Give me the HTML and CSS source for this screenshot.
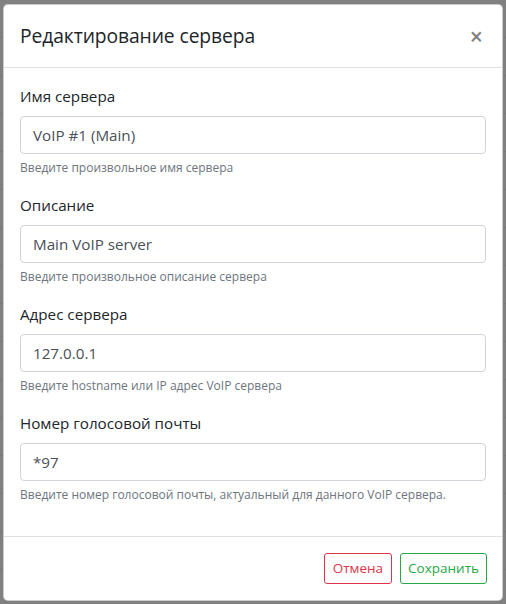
FILE: index.html
```html
<!DOCTYPE html>
<html lang="ru">
<head>
<meta charset="utf-8">
<title>Редактирование сервера</title>
<link rel="stylesheet" href="styles.css">
</head>
<body>
<div class="backdrop">
  <div class="modal">
    <div class="modal-header">
      <h5 class="modal-title">Редактирование сервера</h5>
      <button class="close" type="button" aria-label="Close">×</button>
    </div>
    <div class="modal-body">
      <div class="form-group">
        <label class="label">Имя сервера</label>
        <div class="input">VoIP #1 (Main)</div>
        <small class="help">Введите произвольное имя сервера</small>
      </div>
      <div class="form-group">
        <label class="label">Описание</label>
        <div class="input">Main VoIP server</div>
        <small class="help">Введите произвольное описание сервера</small>
      </div>
      <div class="form-group">
        <label class="label">Адрес сервера</label>
        <div class="input">127.0.0.1</div>
        <small class="help">Введите hostname или IP адрес VoIP сервера</small>
      </div>
      <div class="form-group">
        <label class="label">Номер голосовой почты</label>
        <div class="input">*97</div>
        <small class="help">Введите номер голосовой почты, актуальный для данного VoIP сервера.</small>
      </div>
    </div>
    <div class="modal-footer">
      <button class="btn btn-danger" type="button">Отмена</button>
      <button class="btn btn-success" type="button">Сохранить</button>
    </div>
  </div>
</div>
</body>
</html>
```

FILE: styles.css
```css
* { box-sizing: border-box; }
html, body { margin: 0; padding: 0; }
body {
  width: 506px;
  height: 604px;
  overflow: hidden;
  font-family: "Open Sans", "Noto Sans", sans-serif;
  color: #212529;
  background-color: #808080;
  background-image: repeating-linear-gradient(to bottom, transparent 0, transparent 37px, #787878 37px, #787878 38px);
}
.backdrop {
  padding: 4px 3px 0 3px;
}
.modal {
  width: 500px;
  background: #fff;
  border: 1px solid rgba(0,0,0,0.2);
  border-radius: 5px;
}
.modal-header {
  display: flex;
  align-items: flex-start;
  justify-content: space-between;
  padding: 16px 16px;
  border-bottom: 1px solid #dee2e6;
}
.modal-title {
  margin: 0;
  font-size: 19.3px;
  font-weight: 500;
  line-height: 30px;
  letter-spacing: -0.1px;
}
.close {
  border: 0;
  background: none;
  padding: 0 3px 0 0;
  margin: 0;
  font-family: "Open Sans", sans-serif;
  font-size: 23px;
  font-weight: 600;
  line-height: 30px;
  color: #000;
  opacity: 0.5;
}
.modal-body {
  padding: 16px;
}
.form-group {
  display: flex;
  flex-direction: column;
  margin-bottom: 16px;
}
.label {
  font-size: 15.2px;
  line-height: 24px;
  margin-bottom: 8px;
}
.input {
  height: 38px;
  padding: 6px 12px;
  font-size: 15.2px;
  line-height: 24px;
  color: #495057;
  border: 1px solid #ced4da;
  border-radius: 4px;
  background: #fff;
}
.help {
  margin-top: 4px;
  font-size: 12px;
  line-height: 19px;
  color: #6c757d;
}
.modal-footer {
  display: flex;
  justify-content: flex-end;
  align-items: center;
  padding: 12px 11px 12px 12px;
  border-top: 1px solid #dee2e6;
}
.btn {
  margin: 4px;
  height: 31px;
  padding: 0 8px;
  font-family: "Open Sans", sans-serif;
  font-size: 13.5px;
  line-height: 29px;
  background: #fff;
  border-radius: 3px;
  border: 1px solid;
}
.btn-danger { color: #dc3545; border-color: #dc3545; }
.btn-success { color: #28a745; border-color: #28a745; padding: 0 7px; }
```
